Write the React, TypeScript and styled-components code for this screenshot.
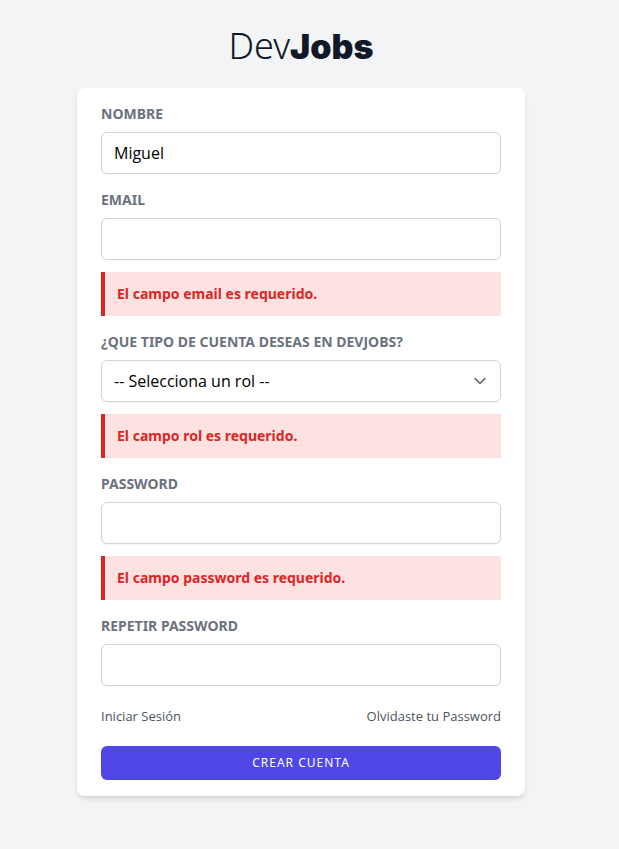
import React from "react";
import styled, { createGlobalStyle } from "styled-components";

const GlobalStyle = createGlobalStyle`
  *, *::before, *::after { box-sizing: border-box; }
  body {
    margin: 0;
    background: #f3f4f6;
    color: #111827;
    font-family: "Noto Sans", "Open Sans", sans-serif;
    font-size: 16px;
    line-height: 24px;
  }
`;

const Page = styled.div`
  min-height: 100vh;
  display: flex;
  flex-direction: column;
  align-items: center;
  padding: 26px 17px 24px 0;
`;

const Logo = styled.h1`
  margin: 0;
  font-family: "Noto Sans", "Open Sans", sans-serif;
  font-size: 36px;
  line-height: 40px;
  font-weight: 300;

  strong {
    font-family: Inter, "Open Sans", sans-serif;
    font-size: 34px;
    line-height: 1;
    font-weight: 900;
  }
`;

const Card = styled.form`
  width: 100%;
  max-width: 448px;
  margin-top: 22px;
  padding: 16px 24px;
  background: #ffffff;
  border-radius: 8px;
  box-shadow: 0 4px 6px -1px rgba(0, 0, 0, 0.1), 0 2px 4px -2px rgba(0, 0, 0, 0.1);
`;

const Field = styled.div`
  display: flex;
  flex-direction: column;
  margin-bottom: 16px;
`;

const Label = styled.label`
  margin-bottom: 8px;
  color: #6b7280;
  font-size: 14px;
  line-height: 20px;
  font-weight: 700;
  text-transform: uppercase;
`;

const controlStyles = `
  width: 100%;
  height: 42px;
  margin: 0;
  padding: 8px 12px;
  border: 1px solid #d1d5db;
  border-radius: 6px;
  background: #ffffff;
  box-shadow: 0 1px 2px 0 rgba(0, 0, 0, 0.05);
  color: #000000;
  font: inherit;
  font-family: "Open Sans", "Noto Sans", sans-serif;
`;

const Input = styled.input`
  ${controlStyles}
`;

const SelectBox = styled.div`
  display: grid;
  align-items: center;

  > * { grid-area: 1 / 1; }
  > svg { justify-self: end; margin-right: 9px; pointer-events: none; }
`;

const Select = styled.select`
  ${controlStyles}
  appearance: none;
  padding-right: 40px;
`;

const ErrorMessage = styled.p`
  margin: 12px 0 0;
  padding: 12px;
  border-left: 4px solid #dc2626;
  background: #fee2e2;
  color: #dc2626;
  font-size: 14px;
  line-height: 20px;
  font-weight: 700;
`;

const Links = styled.nav`
  display: flex;
  justify-content: space-between;
  margin: 20px 0;
`;

const TextLink = styled.a`
  color: #4b5563;
  font-family: "Open Sans", "Noto Sans", sans-serif;
  font-size: 13px;
  line-height: 20px;
  text-decoration: none;
`;

const SubmitButton = styled.button`
  display: block;
  width: 100%;
  padding: 9px 16px;
  border: 0;
  border-radius: 6px;
  background: #4f46e5;
  color: #ffffff;
  font: inherit;
  font-size: 12px;
  line-height: 16px;
  letter-spacing: 1px;
  text-transform: uppercase;
`;

type FormFieldProps = {
  id: string;
  label: string;
  error?: string;
  children: React.ReactNode;
};

function FormField({ id, label, error, children }: FormFieldProps) {
  return (
    <Field>
      <Label htmlFor={id}>{label}</Label>
      {children}
      {error && <ErrorMessage>{error}</ErrorMessage>}
    </Field>
  );
}

export default function App() {
  return (
    <>
      <GlobalStyle />
      <Page>
        <Logo>Dev<strong>Jobs</strong></Logo>
        <Card noValidate onSubmit={(event) => event.preventDefault()}>
          <FormField id="name" label="Nombre">
            <Input id="name" type="text" defaultValue="Miguel" />
          </FormField>
          <FormField id="email" label="Email" error="El campo email es requerido.">
            <Input id="email" type="email" />
          </FormField>
          <FormField id="rol" label="¿Que tipo de cuenta deseas en DevJobs?" error="El campo rol es requerido.">
            <SelectBox>
              <Select id="rol" defaultValue="">
                <option value="">-- Selecciona un rol --</option>
              </Select>
              <svg width="24" height="24" viewBox="0 0 20 20" fill="none" aria-hidden="true">
                <path d="M6 8l4 4 4-4" stroke="#6b7280" strokeWidth="1.5" strokeLinecap="round" strokeLinejoin="round" />
              </svg>
            </SelectBox>
          </FormField>
          <FormField id="password" label="Password" error="El campo password es requerido.">
            <Input id="password" type="password" />
          </FormField>
          <FormField id="password_confirmation" label="Repetir Password">
            <Input id="password_confirmation" type="password" />
          </FormField>
          <Links>
            <TextLink href="#login">Iniciar Sesión</TextLink>
            <TextLink href="#recover">Olvidaste tu Password</TextLink>
          </Links>
          <SubmitButton type="submit">Crear Cuenta</SubmitButton>
        </Card>
      </Page>
    </>
  );
}
